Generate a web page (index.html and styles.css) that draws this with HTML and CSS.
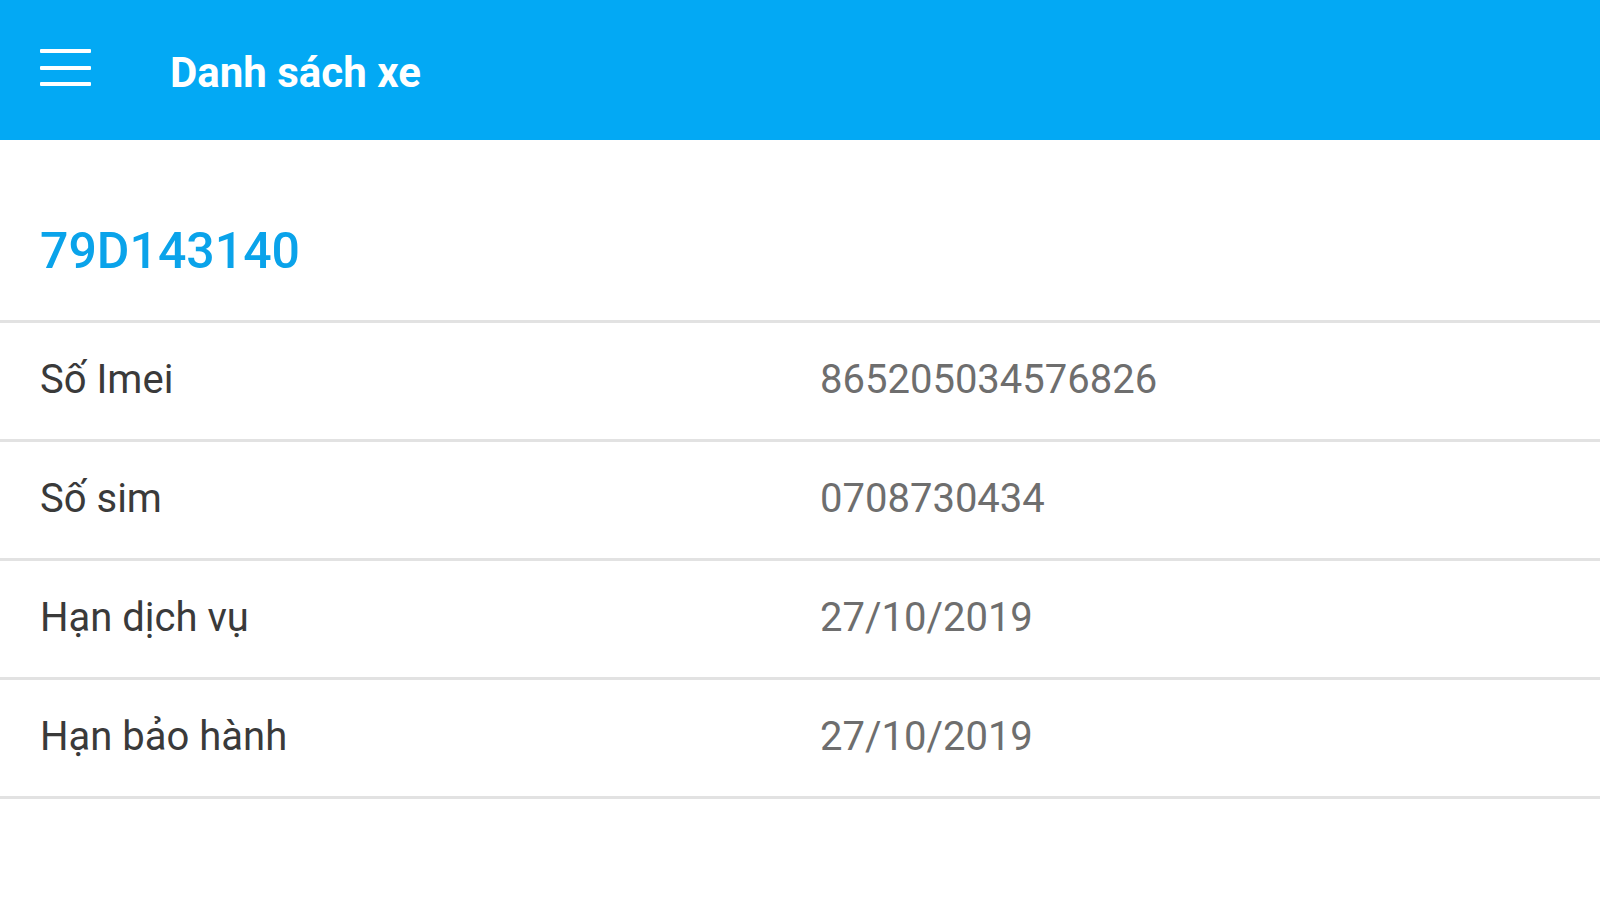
FILE: index.html
```html
<!DOCTYPE html>
<html lang="vi">
<head>
<meta charset="utf-8">
<title>Danh sách xe</title>
<link rel="stylesheet" href="styles.css">
</head>
<body>
<header class="appbar">
  <button class="menu-btn" aria-label="Menu">
    <svg width="51" height="40" viewBox="0 0 51 40" aria-hidden="true">
      <rect x="0" y="3" width="51" height="4" rx="1" fill="#ffffff"/>
      <rect x="0" y="20" width="51" height="4" rx="1" fill="#ffffff"/>
      <rect x="0" y="36" width="51" height="4" rx="1" fill="#ffffff"/>
    </svg>
  </button>
  <h1 class="appbar-title">Danh sách xe</h1>
</header>
<main class="content">
  <section class="plate-section">
    <h2 class="plate">79D143140</h2>
  </section>
  <div class="info-list">
    <div class="info-row"><span class="info-label">Số Imei</span><span class="info-value">865205034576826</span></div>
    <div class="info-row"><span class="info-label">Số sim</span><span class="info-value">0708730434</span></div>
    <div class="info-row"><span class="info-label">Hạn dịch vụ</span><span class="info-value">27/10/2019</span></div>
    <div class="info-row"><span class="info-label">Hạn bảo hành</span><span class="info-value">27/10/2019</span></div>
  </div>
</main>
</body>
</html>
```

FILE: styles.css
```css
* { box-sizing: border-box; }
html, body {
  margin: 0;
  padding: 0;
  background: #ffffff;
  font-family: Roboto, "Noto Sans", "Liberation Sans", sans-serif;
}
.appbar {
  height: 140px;
  background: #03a9f4;
  display: flex;
  align-items: center;
  padding-left: 40px;
}
.menu-btn {
  border: 0;
  padding: 0;
  margin: -8px 0 0 0;
  background: transparent;
  width: 51px;
  height: 40px;
  display: flex;
}
.appbar-title {
  margin: 5px 0 0 79px;
  color: #ffffff;
  font-size: 42px;
  font-weight: 700;
  line-height: 48px;
}
.plate-section {
  padding: 81px 40px 39px;
}
.plate {
  margin: 0;
  color: #0aa3ea;
  font-size: 50px;
  font-weight: 500;
  line-height: 60px;
}
.info-row {
  display: grid;
  grid-template-columns: 780px 1fr;
  padding: 33px 40px 35px;
  border-top: 3px solid #e2e2e2;
  font-size: 40px;
  line-height: 48px;
}
.info-row:last-child {
  border-bottom: 3px solid #e2e2e2;
}
.info-label {
  color: #3a3a3a;
}
.info-value {
  color: #6e6e6e;
}
```
